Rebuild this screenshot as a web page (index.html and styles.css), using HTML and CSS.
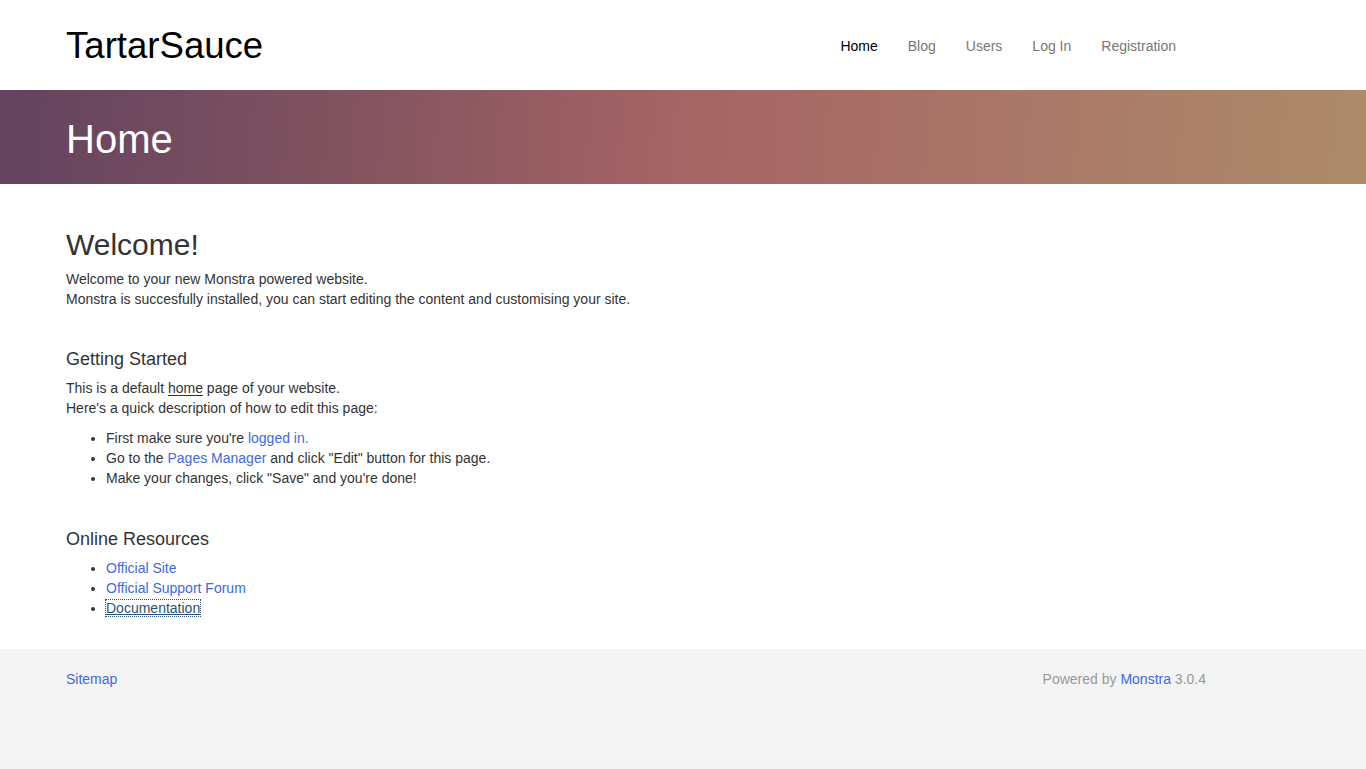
FILE: index.html
```html
<!DOCTYPE html>
<html lang="en">
<head>
<meta charset="utf-8">
<title>TartarSauce</title>
<link rel="stylesheet" href="styles.css">
</head>
<body>
<header class="site-header">
  <div class="container header-inner">
    <a class="brand" href="#">TartarSauce</a>
    <nav class="nav">
      <a class="nav-link active" href="#">Home</a>
      <a class="nav-link" href="#">Blog</a>
      <a class="nav-link" href="#">Users</a>
      <a class="nav-link" href="#">Log In</a>
      <a class="nav-link" href="#">Registration</a>
    </nav>
  </div>
</header>
<section class="banner">
  <div class="container">
    <h2 class="banner-title">Home</h2>
  </div>
</section>
<main class="main">
  <div class="container">
    <h1 class="title">Welcome!</h1>
    <p>Welcome to your new Monstra powered website.<br>Monstra is succesfully installed, you can start editing the content and customising your site.</p>
    <h3 class="section-title">Getting Started</h3>
    <p>This is a default <u class="u">home</u> page of your website.<br>Here's a quick description of how to edit this page:</p>
    <ul class="list">
      <li>First make sure you're <a href="#">logged in.</a></li>
      <li>Go to the <a href="#">Pages Manager</a> and click "Edit" button for this page.</li>
      <li>Make your changes, click "Save" and you're done!</li>
    </ul>
    <h3 class="section-title section-title-2">Online Resources</h3>
    <ul class="list">
      <li><a href="#">Official Site</a></li>
      <li><a href="#">Official Support Forum</a></li>
      <li><a class="focused" href="#">Documentation</a></li>
    </ul>
  </div>
</main>
<footer class="footer">
  <div class="container footer-inner">
    <a href="#">Sitemap</a>
    <span class="powered">Powered by <a href="#">Monstra</a> 3.0.4</span>
  </div>
</footer>
</body>
</html>
```

FILE: styles.css
```css
html, body {
  margin: 0;
  padding: 0;
}
body {
  font-family: "Liberation Sans", Arial, sans-serif;
  font-size: 14px;
  line-height: 20px;
  color: #333;
  background: #f4f4f4;
}
a {
  color: #4169e1;
  text-decoration: none;
}
.container {
  width: 1140px;
  margin-left: 66px;
}
.site-header {
  background: #fff;
  height: 90px;
}
.header-inner {
  display: flex;
  align-items: center;
  justify-content: space-between;
  height: 90px;
}
.brand {
  font-size: 36.6px;
  line-height: 40px;
  color: #000;
  margin-top: 2px;
}
.nav {
  display: flex;
  margin-right: 30px;
}
.nav-link {
  color: #777;
  padding: 0 15px;
  line-height: 20px;
  margin-top: 2px;
}
.nav-link:last-child {
  padding-right: 0;
}
.nav-link.active {
  color: #000;
}
.banner {
  height: 94px;
  background: linear-gradient(95deg, #634360 0%, #80525f 24%, #a66465 50%, #aa7a68 78%, #ad8b68 100%);
  display: flex;
  align-items: center;
}
.banner-title {
  margin: 0;
  font-size: 40px;
  line-height: 44px;
  font-weight: normal;
  color: #fff;
  margin-top: 3px;
}
.main {
  background: #fff;
  padding: 44px 0 21px;
}
.title {
  margin: 0 0 8px;
  font-size: 30px;
  line-height: 33px;
  font-weight: normal;
  color: #333;
}
p {
  margin: 0 0 10px;
}
.section-title {
  margin: 40px 0 9px;
  font-size: 18px;
  line-height: 20px;
  font-weight: normal;
  color: #333;
}
.section-title-2 {
  margin-top: 41px;
}
.u {
  text-decoration: underline;
  text-underline-offset: 2px;
}
.list {
  margin: 0 0 10px;
  padding-left: 40px;
}
.focused {
  color: #2a527c;
  text-decoration: underline;
  outline: 1px dotted #2a527c;
}
.footer {
  background: #f4f4f4;
  padding: 20px 0 70px;
}
.footer-inner {
  display: flex;
  justify-content: space-between;
}
.powered {
  color: #999;
}
```
